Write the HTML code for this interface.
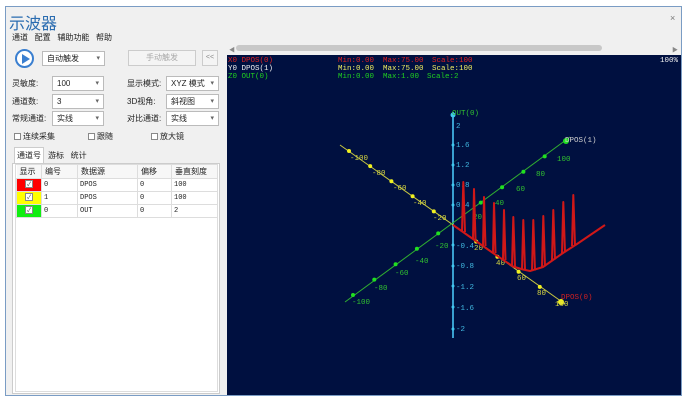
<!DOCTYPE html>
<html><head><meta charset="utf-8"><style>
*{box-sizing:border-box;margin:0;padding:0}
body{width:686px;height:401px;background:#fff;font-family:"Liberation Sans","Noto Sans CJK SC",sans-serif;font-size:8px;color:#222;position:relative;overflow:hidden}
.abs{position:absolute}
.win{left:5px;top:6px;width:677px;height:390px;border:1px solid #7a9cc4;background:#f0f0f0}
.cb{position:absolute;height:15px;border:1px solid #bbb;background:#fff;font-size:8px;line-height:13px;padding-left:4px}
.cb:after{content:"▾";position:absolute;right:4px;top:0;font-size:7px;color:#666}
.lb{position:absolute;font-size:8px}
.chk{display:inline-block;width:7px;height:7px;border:1px solid #888;background:#fff;vertical-align:-1px;margin-right:2px}
table{border-collapse:collapse;font-size:7px}
td{border:1px solid #ddd;height:13px;padding-left:2px;font-family:"Liberation Mono","Noto Sans CJK SC",monospace}
th{font-weight:normal;font-size:8px;border-right:1px solid #ddd;text-align:left;padding-left:3px;height:13px;background:#f7f7f7}
.c{text-align:center;padding:0}
.cm{display:inline-block;width:8px;height:8px;background:#fff;border:1px solid #888;font-size:6px;line-height:7px;color:#444}
</style></head><body>
<div class="abs win"></div>
<div class="abs" style="left:9px;top:10px;font-size:16px;color:#2a6cb0">示波器</div>
<div class="abs" style="left:670px;top:13px;font-size:9px;color:#777">×</div>
<div class="abs" style="left:12px;top:32px;font-size:8px">通道&nbsp;&nbsp;&nbsp;配置&nbsp;&nbsp;&nbsp;辅助功能&nbsp;&nbsp;&nbsp;帮助</div>
<div class="abs" style="left:6px;top:44px;width:220px;height:350px;background:#f0f0f0"></div>
<div class="abs" style="left:15px;top:49px;width:19px;height:19px;border:2px solid #3a7fd0;border-radius:50%;background:#fff"></div>
<div class="abs" style="left:22px;top:54px;width:0;height:0;border-left:8px solid #3a7fd0;border-top:5px solid transparent;border-bottom:5px solid transparent"></div>
<div class="cb" style="left:42px;top:51px;width:63px">自动触发</div>
<div class="abs" style="left:128px;top:50px;width:68px;height:16px;border:1px solid #ccc;background:#f4f4f4;color:#aaa;text-align:center;line-height:14px">手动触发</div>
<div class="abs" style="left:202px;top:50px;width:16px;height:16px;border:1px solid #ccc;background:#f4f4f4;color:#888;text-align:center;line-height:14px;font-size:7px">&lt;&lt;</div>
<div class="lb" style="left:12px;top:78px">灵敏度:</div><div class="cb" style="left:52px;top:76px;width:52px">100</div>
<div class="lb" style="left:127px;top:78px">显示模式:</div><div class="cb" style="left:166px;top:76px;width:53px">XYZ 模式</div>
<div class="lb" style="left:12px;top:96px">通道数:</div><div class="cb" style="left:52px;top:94px;width:52px">3</div>
<div class="lb" style="left:127px;top:96px">3D视角:</div><div class="cb" style="left:166px;top:94px;width:53px">斜视图</div>
<div class="lb" style="left:12px;top:113px">常规通道:</div><div class="cb" style="left:52px;top:111px;width:52px">实线</div>
<div class="lb" style="left:127px;top:113px">对比通道:</div><div class="cb" style="left:166px;top:111px;width:53px">实线</div>
<div class="lb" style="left:14px;top:131px"><span class="chk"></span>连续采集</div>
<div class="lb" style="left:88px;top:131px"><span class="chk"></span>跟随</div>
<div class="lb" style="left:151px;top:131px"><span class="chk"></span>放大镜</div>
<div class="abs" style="left:14px;top:147px;width:30px;height:17px;background:#fff;border:1px solid #ccc;border-bottom:none;text-align:center;line-height:15px">通道号</div>
<div class="lb" style="left:48px;top:150px">游标&nbsp;&nbsp;&nbsp;统计</div>
<div class="abs" style="left:12px;top:163px;width:208px;height:231px;background:#fff;border:1px solid #ccc"></div>
<div class="abs" style="left:15px;top:164px;width:203px;height:228px;border:1px solid #ddd;background:#fff">
<table style="width:202px">
<tr><th style="width:25px">显示</th><th style="width:36px">编号</th><th style="width:60px">数据源</th><th style="width:34px">偏移</th><th>垂直刻度</th></tr>
<tr><td class="c" style="background:#f00"><span class="cm">✓</span></td><td>0</td><td>DPOS</td><td>0</td><td>100</td></tr>
<tr><td class="c" style="background:#ff0"><span class="cm">✓</span></td><td>1</td><td>DPOS</td><td>0</td><td>100</td></tr>
<tr><td class="c" style="background:#1e1"><span class="cm">✓</span></td><td>0</td><td>OUT</td><td>0</td><td>2</td></tr>
</table></div>
<div class="abs" style="left:226px;top:42px;width:455px;height:13px;background:#f0f0f0"></div>
<div class="abs" style="left:236px;top:45px;width:366px;height:6px;background:#c8c8c8;border-radius:3px"></div>
<div class="abs" style="left:229px;top:45px;font-size:6px;color:#888">◀</div>
<div class="abs" style="left:672px;top:45px;font-size:6px;color:#888">▶</div>
<svg class="abs" style="left:227px;top:55px" width="454" height="340" viewBox="227 55 454 340">
<rect x="227" y="55" width="454" height="340" fill="#001040"/>
<g font-family="Liberation Mono,monospace" font-size="7.5">
<text x="228" y="62" fill="#e02020">X0 DPOS(0)</text>
<text x="228" y="70" fill="#f0f0f0">Y0 DPOS(1)</text>
<text x="228" y="78" fill="#20d020">Z0 OUT(0)</text>
<g fill="#e02020"><text x="338" y="62">Min:0.00</text><text x="383" y="62">Max:75.00</text><text x="432" y="62">Scale:100</text></g>
<g fill="#f0f060"><text x="338" y="70">Min:0.00</text><text x="383" y="70">Max:75.00</text><text x="432" y="70">Scale:100</text></g>
<g fill="#20d020"><text x="338" y="78">Min:0.00</text><text x="383" y="78">Max:1.00</text><text x="427" y="78">Scale:2</text></g>
<text x="660" y="62" fill="#f0f0f0">100%</text>
</g>
<line x1="453" y1="112" x2="453" y2="338" stroke="#3aa0d0" stroke-width="2"/>
<line x1="340" y1="145" x2="565" y2="304" stroke="#c8c840" stroke-width="1"/>
<line x1="345" y1="302" x2="570" y2="137" stroke="#30b030" stroke-width="1"/>
<g fill="#f0f020">
<circle cx="349" cy="151" r="2"/><circle cx="370.2" cy="166.1" r="2"/><circle cx="391.4" cy="181.2" r="2"/><circle cx="412.6" cy="196.3" r="2"/><circle cx="433.8" cy="211.4" r="2"/><circle cx="476.2" cy="241.6" r="2"/><circle cx="497.4" cy="256.7" r="2"/><circle cx="518.6" cy="271.8" r="2"/><circle cx="539.8" cy="286.9" r="2"/><circle cx="561" cy="302" r="3"/>
</g>
<g fill="#20e020">
<circle cx="353" cy="295" r="2"/><circle cx="374.3" cy="279.6" r="2"/><circle cx="395.6" cy="264.2" r="2"/><circle cx="416.9" cy="248.8" r="2"/><circle cx="438.2" cy="233.4" r="2"/><circle cx="480.8" cy="202.6" r="2"/><circle cx="502.1" cy="187.2" r="2"/><circle cx="523.4" cy="171.8" r="2"/><circle cx="544.7" cy="156.4" r="2"/><circle cx="566" cy="141" r="3"/>
</g>
<g fill="#40c8f0">
<circle cx="453" cy="115" r="2.5"/><circle cx="453" cy="145" r="1.5"/><circle cx="453" cy="165" r="1.5"/><circle cx="453" cy="185" r="1.5"/><circle cx="453" cy="205" r="1.5"/><circle cx="453" cy="245" r="1.5"/><circle cx="453" cy="266" r="1.5"/><circle cx="453" cy="286" r="1.5"/><circle cx="453" cy="307" r="1.5"/><circle cx="453" cy="329" r="1.5"/>
</g>
<g font-family="Liberation Mono,monospace" font-size="7.5">
<g fill="#d8d840">
<text x="350" y="160">-100</text><text x="372" y="175">-80</text><text x="393" y="190">-60</text><text x="413" y="205">-40</text><text x="433" y="220">-20</text>
<text x="474" y="250">20</text><text x="496" y="265">40</text><text x="517" y="280">60</text><text x="537" y="295">80</text><text x="555" y="306">100</text>
</g>
<g fill="#30c030">
<text x="352" y="304">-100</text><text x="374" y="290">-80</text><text x="395" y="275">-60</text><text x="415" y="263">-40</text><text x="435" y="248">-20</text>
<text x="473" y="219">20</text><text x="495" y="205">40</text><text x="516" y="191">60</text><text x="536" y="176">80</text><text x="557" y="161">100</text>
</g>
<g fill="#40b8e0">
<text x="456" y="128">2</text><text x="456" y="147">1.6</text><text x="456" y="167">1.2</text><text x="456" y="187">0.8</text><text x="456" y="207">0.4</text><text x="456" y="248">-0.4</text><text x="456" y="268">-0.8</text><text x="456" y="289">-1.2</text><text x="456" y="310">-1.6</text><text x="456" y="331">-2</text>
</g>
<text x="452" y="115" fill="#30c030">OUT(0)</text>
<text x="565" y="142" fill="#d0d0d0">DPOS(1)</text>
<text x="561" y="299" fill="#d02020">DPOS(0)</text>
</g>
<g stroke="#d01818" stroke-width="2" fill="none" stroke-linejoin="round">
<polyline points="453,225 473,239 493,253 513,266.5 523,269.5 530,271 543,267 553,260 563,253 577,244 605,225"/>
<path d="M462,231 L463.3,182 L465,232 M473,239 L474,189 L475.5,239.5 M483,246 L484,197 L485.5,246 M493,253 L494,203 L495.5,253 M503,259 L504,210 L505.5,260 M512,266 L513.3,217 L515,266.5 M522,269 L523.3,220 L525,269.5 M532,270 L533.3,220 L535,270.5 M542,267 L543.3,216 L545,266.5 M552,260 L553.3,210 L555,259.5 M562,253 L563.3,202 L565,252.5 M572,246 L573.3,195 L575,245.5"/>
</g>
</svg>
</body></html>
